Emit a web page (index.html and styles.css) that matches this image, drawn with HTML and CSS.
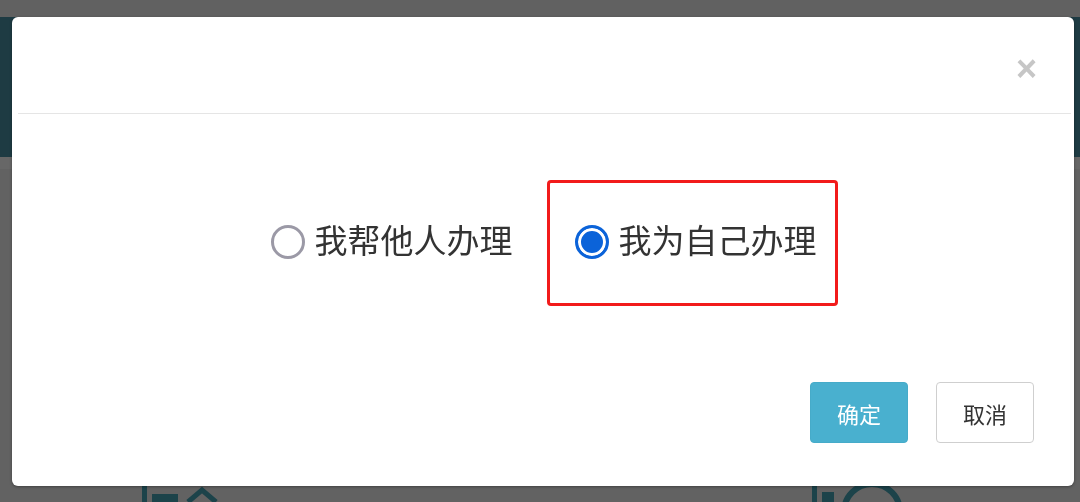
FILE: index.html
```html
<!DOCTYPE html>
<html lang="zh-CN">
<head>
  <meta charset="UTF-8" />
  <meta name="viewport" content="width=device-width, initial-scale=1.0"/>
  <title>选择办理方式</title>
  <link rel="stylesheet" href="styles.css">
</head>
<body>

<div class="page">
  <div class="page-top"></div>
  <div class="page-banner"></div>
  <div class="page-line"></div>
  <div class="page-content">
    <div class="page-icons">
      <svg class="page-icon first" width="80" height="20" viewBox="0 0 80 20">
        <rect x="0" y="4" width="5" height="16" fill="#1c434a"/>
        <rect x="10" y="12" width="26" height="8" fill="#1c434a"/>
        <path d="M46 20 L60 8 L74 20" fill="none" stroke="#1c434a" stroke-width="5"/>
      </svg>
      <svg class="page-icon second" width="100" height="20" viewBox="0 0 100 20">
        <rect x="0" y="2" width="5" height="18" fill="#1c434a"/>
        <rect x="10" y="10" width="12" height="10" fill="#1c434a"/>
        <circle cx="60" cy="30" r="28" fill="none" stroke="#1c434a" stroke-width="6"/>
      </svg>
    </div>
  </div>
</div>

<div class="modal">
  <div class="modal-header">
    <span class="modal-close">&times;</span>
  </div>

  <div class="modal-body">
    <label class="choice">
      <span class="radio"></span>
      <span class="choice-text">我帮他人办理</span>
    </label>
    <label class="choice marked">
      <span class="radio checked"></span>
      <span class="choice-text">我为自己办理</span>
    </label>
  </div>

  <div class="modal-footer">
    <button class="btn btn-info">确定</button>
    <button class="btn btn-default">取消</button>
  </div>
</div>

</body>
</html>
```

FILE: styles.css
```css
* {
  box-sizing: border-box;
}

body {
  margin: 0;
  background: #626262;
  font-family: "Microsoft YaHei", "Noto Sans CJK SC", sans-serif;
  overflow: hidden;
}

.page-top {
  height: 17px;
  background: #616161;
}

.page-banner {
  height: 140px;
  background: #1e3b43;
}

.page-line {
  height: 12px;
  background: #676767;
}

.page-content {
  height: 333px;
  display: flex;
  flex-direction: column;
  justify-content: flex-end;
}

.page-icons {
  display: flex;
  padding-left: 142px;
}

.page-icon.second {
  margin-left: 590px;
}

.modal {
  position: fixed;
  top: 17px;
  left: 12px;
  width: 1062px;
  height: 469px;
  background: #fff;
  border-radius: 6px;
  box-shadow: 0 1px 3px rgba(0,0,0,0.35);
  display: flex;
  flex-direction: column;
}

.modal-header {
  height: 97px;
  margin: 0 3px 0 6px;
  border-bottom: 1px solid #e5e5e5;
  display: flex;
  justify-content: flex-end;
  align-items: center;
  padding-right: 34px;
}

.modal-close {
  font-family: "Liberation Sans", Arial, sans-serif;
  font-size: 36px;
  font-weight: bold;
  line-height: 1;
  color: #c6c6c6;
  margin-top: 8px;
  cursor: pointer;
}

.modal-body {
  display: flex;
  justify-content: center;
  align-items: center;
  gap: 34px;
  padding: 66px 0 0 22px;
}

.choice {
  display: flex;
  align-items: center;
  gap: 10px;
  cursor: pointer;
}

.choice.marked {
  height: 126px;
  padding: 0 18px 0 25px;
  border: 3px solid #f21b1b;
  border-radius: 4px;
}

.radio {
  width: 34px;
  height: 34px;
  border-radius: 50%;
  border: 3px solid #9b99a6;
  background: #fff;
  margin-bottom: 2px;
}

.radio.checked {
  border-color: #0b63d9;
  background: #0b63d9;
  box-shadow: inset 0 0 0 3px #fff;
}

.choice-text {
  font-size: 33px;
  color: #333;
  line-height: 1;
  padding-bottom: 7px;
}

.modal-footer {
  display: flex;
  justify-content: flex-end;
  gap: 28px;
  padding: 76px 40px 0 0;
}

.btn {
  width: 98px;
  height: 61px;
  font-family: inherit;
  font-size: 22px;
  border-radius: 4px;
  cursor: pointer;
}

.btn-info {
  background: #49b0cf;
  border: 1px solid #46abc9;
  color: #fff;
}

.btn-default {
  background: #fff;
  border: 1px solid #cfcfcf;
  color: #333;
}
```
